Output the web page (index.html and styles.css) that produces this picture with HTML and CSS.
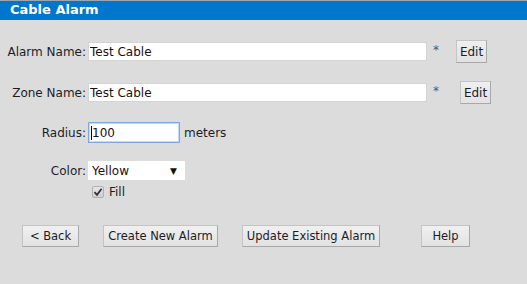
FILE: index.html
```html
<!DOCTYPE html>
<html>
<head>
<meta charset="utf-8">
<link rel="stylesheet" href="styles.css">
</head>
<body>
<div class="titlebar">Cable Alarm</div>
<form class="form">
  <div class="row row-name">
    <label class="lbl">Alarm Name:</label>
    <input class="txt wide" type="text" value="Test Cable">
    <span class="req">*</span>
    <button type="button" class="btn edit edit1">Edit</button>
  </div>
  <div class="row row-zone">
    <label class="lbl">Zone Name:</label>
    <input class="txt wide" type="text" value="Test Cable">
    <span class="req">*</span>
    <button type="button" class="btn edit edit2">Edit</button>
  </div>
  <div class="row row-radius">
    <label class="lbl">Radius:</label>
    <div class="focus-box"><span class="caret"></span>100</div>
    <span class="unit">meters</span>
  </div>
  <div class="row row-color">
    <label class="lbl">Color:</label>
    <div class="select"><span>Yellow</span><span class="arrow">&#9660;</span></div>
  </div>
  <div class="row row-fill">
    <span class="lbl"></span>
    <span class="check"><svg width="10" height="10" viewBox="0 0 10 10"><path d="M1.5 5.2 L4 7.8 L8.6 1.8" fill="none" stroke="#333" stroke-width="1.8"/></svg></span>
    <span class="fill-text">Fill</span>
  </div>
  <div class="row row-buttons">
    <button type="button" class="btn b-back">&lt; Back</button>
    <button type="button" class="btn b-create">Create New Alarm</button>
    <button type="button" class="btn b-update">Update Existing Alarm</button>
    <button type="button" class="btn b-help">Help</button>
  </div>
</form>
</body>
</html>
```
FILE: styles.css
```css
html, body {
  margin: 0;
  padding: 0;
  background: #dcdcdc;
  width: 527px;
  height: 284px;
  overflow: hidden;
  font-family: "DejaVu Sans", Verdana, sans-serif;
  font-size: 12px;
  color: #1c1c28;
}
.titlebar {
  height: 20px;
  box-sizing: border-box;
  border-top: 1px solid #9aa6b2;
  background: #0077cc;
  color: #fff;
  font-weight: bold;
  font-size: 13px;
  line-height: 18px;
  padding-left: 10px;
}
.form {
  display: flex;
  flex-direction: column;
  margin: 0;
}
.row {
  display: flex;
  align-items: center;
}
.lbl {
  width: 87px;
  text-align: right;
  flex: none;
  white-space: nowrap;
  padding-right: 1px;
  box-sizing: border-box;
}
.row-name { margin-top: 20px; height: 23px; }
.row-zone { margin-top: 18px; height: 23px; }
.row-radius { margin-top: 18px; height: 21px; }
.row-color { margin-top: 18px; height: 19px; }
.row-fill { margin-top: 5px; height: 13px; }
.row-buttons { margin-top: 27px; height: 22px; padding-left: 22px; }

.txt {
  font: inherit;
  color: #1a1010;
  background: #fff;
  border: 1px solid #d4d4d4;
  height: 19px;
  box-sizing: border-box;
  padding: 0 1px;
  margin: 0;
  outline: none;
}
.wide { width: 339px; margin-left: 1px; }
.req {
  margin-left: 6px;
  color: #4a5a6a;
  font-size: 12px;
  width: 6px;
  align-self: flex-start;
  margin-top: 3px;
}
.btn {
  font: inherit;
  color: #1c1c28;
  background: linear-gradient(#f0f0f0, #e2e2e2);
  border: 1px solid #c4c4c4;
  border-right-color: #a8a8a8;
  border-bottom-color: #a8a8a8;
  height: 23px;
  padding: 0;
  margin: 0;
  box-sizing: border-box;
  white-space: nowrap;
  overflow: visible;
}
.edit { width: 31px; }
.edit1 { margin-left: 17px; }
.edit2 { margin-left: 21px; }

.focus-box {
  margin-left: 1px;
  width: 92px;
  height: 21px;
  box-sizing: border-box;
  border: 1px solid #7fa6e6;
  box-shadow: inset 0 0 0 1px #c6d8f6;
  background: #fff;
  display: flex;
  align-items: center;
  padding-left: 2px;
  color: #1a1010;
}
.caret {
  display: inline-block;
  width: 1px;
  height: 14px;
  background: #000;
}
.unit { margin-left: 4px; }

.select {
  margin-left: 1px;
  width: 97px;
  height: 19px;
  box-sizing: border-box;
  background: #fff;
  display: flex;
  align-items: center;
  justify-content: space-between;
  padding: 0 8px 0 4px;
  color: #1a1010;
}
.arrow { font-size: 9px; color: #111; }

.check {
  margin-left: 5px;
  width: 12px;
  height: 12px;
  box-sizing: border-box;
  border: 1px solid #b0b0b0;
  border-radius: 2px;
  background: linear-gradient(#e6e6e6, #cfcfcf);
  display: flex;
  align-items: center;
  justify-content: center;
}
.fill-text { margin-left: 5px; }

.row-buttons .btn { height: 22px; font-size: 11.5px; }
.b-back { width: 57px; }
.b-create { width: 115px; margin-left: 24px; }
.b-update { width: 138px; margin-left: 24px; }
.b-help { width: 49px; margin-left: 41px; }
```
